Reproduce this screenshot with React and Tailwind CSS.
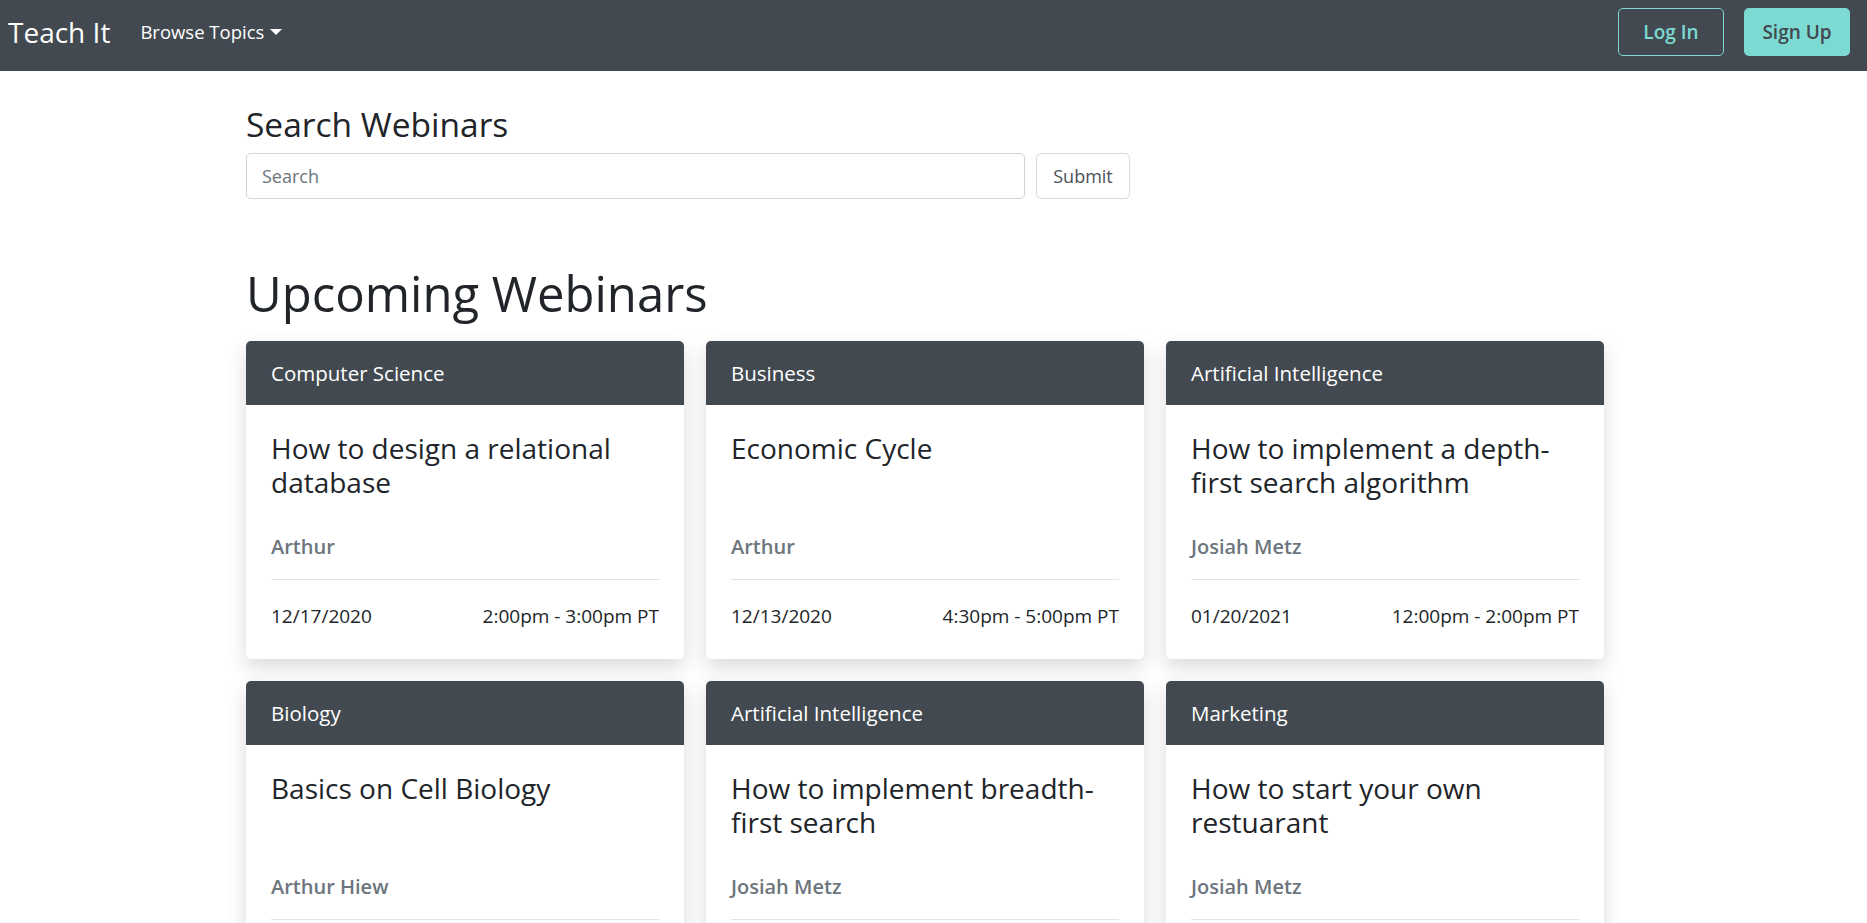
import React, { useState } from 'react';

const webinars = [
  {
    topic: 'Computer Science',
    title: 'How to design a relational database',
    host: 'Arthur',
    date: '12/17/2020',
    time: '2:00pm - 3:00pm PT',
  },
  {
    topic: 'Business',
    title: 'Economic Cycle',
    host: 'Arthur',
    date: '12/13/2020',
    time: '4:30pm - 5:00pm PT',
  },
  {
    topic: 'Artificial Intelligence',
    title: 'How to implement a depth-first search algorithm',
    host: 'Josiah Metz',
    date: '01/20/2021',
    time: '12:00pm - 2:00pm PT',
  },
  {
    topic: 'Biology',
    title: 'Basics on Cell Biology',
    host: 'Arthur Hiew',
    date: '01/05/2021',
    time: '1:00pm - 2:00pm PT',
  },
  {
    topic: 'Artificial Intelligence',
    title: 'How to implement breadth-first search',
    host: 'Josiah Metz',
    date: '01/22/2021',
    time: '12:00pm - 2:00pm PT',
  },
  {
    topic: 'Marketing',
    title: 'How to start your own restuarant',
    host: 'Josiah Metz',
    date: '02/02/2021',
    time: '3:00pm - 4:00pm PT',
  },
];

function Navbar() {
  return (
    <nav className="h-[71px] bg-[#424950] pb-[7px] flex items-center justify-between">
      <div className="flex items-center">
        <a href="#" className="ml-[8px] text-[28px] text-white leading-none">
          Teach It
        </a>
        <button className="ml-[30px] flex items-center text-[18.5px] text-white">
          Browse Topics
          {/* dropdown caret */}
          <span className="ml-[6px] w-0 h-0 border-l-[6px] border-r-[6px] border-t-[6px] border-l-transparent border-r-transparent border-t-white" />
        </button>
      </div>
      <div className="flex items-center gap-[20px] mr-[17px]">
        <button className="w-[106px] h-[48px] rounded-[5px] border border-[#7cdad2] text-[#7cdad2] text-[19px] font-semibold">
          Log In
        </button>
        <button className="w-[106px] h-[48px] rounded-[5px] bg-[#7cdad2] text-[#424950] text-[19px] font-semibold">
          Sign Up
        </button>
      </div>
    </nav>
  );
}

function WebinarCard({ webinar }) {
  return (
    <div className="rounded-[5px] bg-white shadow-[0_8px_20px_rgba(0,0,0,0.15)] overflow-hidden">
      <div className="h-[64px] bg-[#424950] px-[25px] flex items-center text-[20.5px] text-white">
        {webinar.topic}
      </div>
      <div className="pt-[26px] px-[25px] pb-[28px]">
        <h4 className="h-[68px] text-[28px] leading-[34px] font-medium text-[#212529]">
          {webinar.title}
        </h4>
        <h6 className="mt-[35px] h-[25px] text-[20px] leading-[25px] font-semibold text-[#6c757d]">
          {webinar.host}
        </h6>
        <hr className="mt-[20px] border-0 border-t border-[#e3e3e3]" />
        <div className="mt-[21px] h-[30px] flex justify-between items-center text-[19px] text-[#212529]">
          <span>{webinar.date}</span>
          <span>{webinar.time}</span>
        </div>
      </div>
    </div>
  );
}

export default function App() {
  const [query, setQuery] = useState('');

  return (
    <div className="min-h-screen bg-white font-['Open_Sans',sans-serif] text-[#212529]">
      <Navbar />
      <div className="pr-[17px]">
        <div className="mx-auto w-[1358px]">
          <h3 className="mt-[33px] text-[33.5px] leading-[40px] font-medium">Search Webinars</h3>
          <form className="mt-[9px] flex gap-[11px]" onSubmit={(e) => e.preventDefault()}>
            <input
              className="w-[779px] h-[46px] rounded-[5px] border border-[#ced4da] px-[15px] text-[18px] text-[#495057] placeholder:text-[#6c757d] outline-none"
              placeholder="Search"
              value={query}
              onChange={(e) => setQuery(e.target.value)}
            />
            <button className="w-[94px] h-[46px] rounded-[5px] border border-[#d6dadf] text-[18px] text-[#495057]">
              Submit
            </button>
          </form>

          <h1 className="mt-[65px] text-[49px] leading-[58px] font-medium">Upcoming Webinars</h1>
          <div className="mt-[19px] grid grid-cols-3 gap-x-[22px] gap-y-[22px] pb-[40px]">
            {webinars.map((w, i) => (
              <WebinarCard key={i} webinar={w} />
            ))}
          </div>
        </div>
      </div>
    </div>
  );
}
